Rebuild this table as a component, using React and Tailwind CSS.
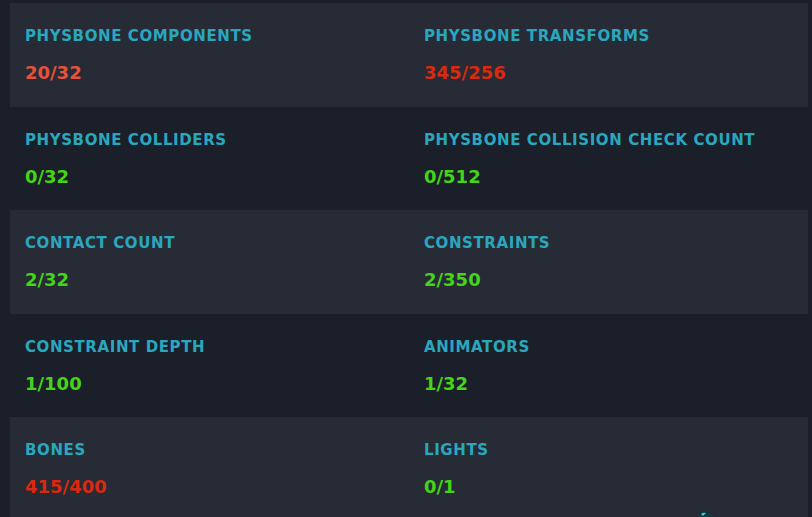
const rows = [
  [
    { label: 'Physbone Components', value: '20/32', tone: 'warn' },
    { label: 'Physbone Transforms', value: '345/256', tone: 'bad' },
  ],
  [
    { label: 'Physbone Colliders', value: '0/32', tone: 'ok' },
    { label: 'Physbone Collision Check Count', value: '0/512', tone: 'ok' },
  ],
  [
    { label: 'Contact Count', value: '2/32', tone: 'ok' },
    { label: 'Constraints', value: '2/350', tone: 'ok' },
  ],
  [
    { label: 'Constraint Depth', value: '1/100', tone: 'ok' },
    { label: 'Animators', value: '1/32', tone: 'ok' },
  ],
  [
    { label: 'Bones', value: '415/400', tone: 'bad' },
    { label: 'Lights', value: '0/1', tone: 'ok' },
  ],
];

const toneClass = {
  ok: 'text-[#44d418]',
  warn: 'text-[#e5523a]',
  bad: 'text-[#d9290f]',
};

function Stat({ label, value, tone }) {
  return (
    <div className="w-1/2 px-[15px] pt-[23px]">
      <div className="text-[15px] leading-[20px] font-bold uppercase tracking-[0.6px] text-[#2aa7be]">{label}</div>
      <div className={`mt-[15px] text-[18px] leading-[24px] font-bold ${toneClass[tone]}`}>{value}</div>
    </div>
  );
}

export default function App() {
  return (
    <div
      className="relative w-[812px] h-[517px] overflow-hidden bg-[#1b1f29] pt-[3px] pl-[10px] pr-[4px]"
      style={{ fontFamily: '"DejaVu Sans", Verdana, sans-serif' }}
    >
      {rows.map((row, i) => (
        <div key={i} className={`flex h-[103.5px] ${i % 2 === 0 ? 'bg-[#272b36]' : ''}`}>
          {row.map((s) => (
            <Stat key={s.label} {...s} />
          ))}
        </div>
      ))}

      {/* Cursor peeking in at the bottom */}
      <svg className="absolute left-[697px] top-[510px]" width="24" height="14" viewBox="0 0 24 14">
        <path d="M2 4 Q6 0 12 3 L20 8 L20 14 L2 14 Z" fill="#0f3a40" />
        <path d="M4 4 Q6 2 9 3 L6 6 Z" fill="#2fd0dc" />
      </svg>
    </div>
  );
}
